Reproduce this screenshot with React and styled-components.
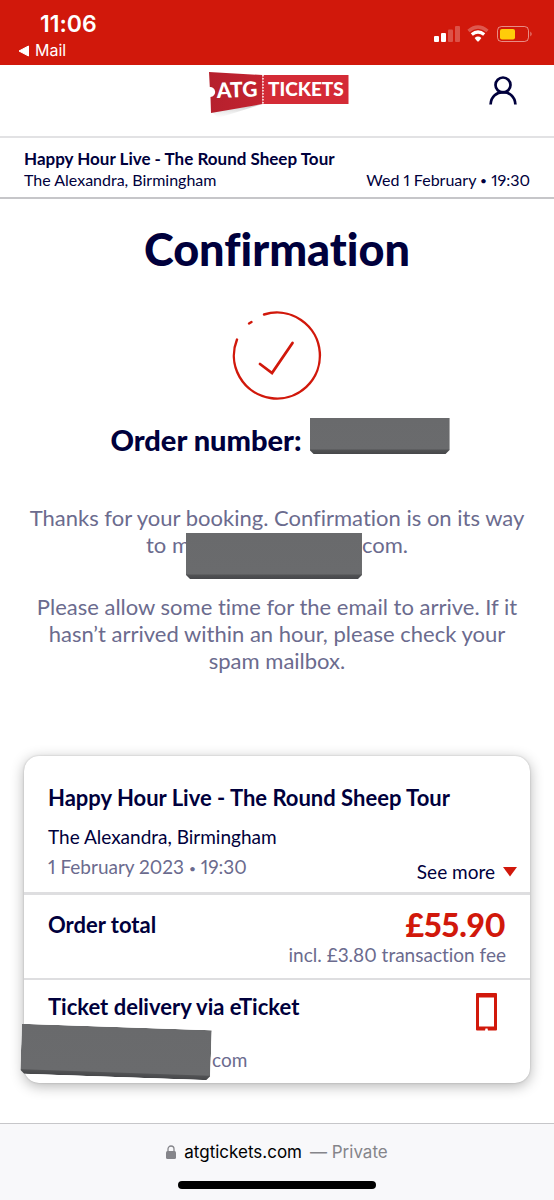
import React from "react";
import styled, { createGlobalStyle } from "styled-components";

const navy = "#00003c";
const slate = "#6b6b8e";
const red = "#d1180b";

const GlobalStyle = createGlobalStyle`
  * {
    box-sizing: border-box;
  }

  body {
    margin: 0;
    background: #fff;
    color: ${navy};
    font-family: Lato, "Open Sans", sans-serif;
    font-variant-ligatures: none;
    font-variant-numeric: proportional-nums;
  }

  h1, h2, h3, p {
    margin: 0;
  }
`;

const Page = styled.div`
  min-height: 100vh;
  display: flex;
  flex-direction: column;
`;

const StatusBar = styled.div`
  height: 65px;
  padding: 10px 22px 0 18px;
  display: flex;
  justify-content: space-between;
  background: ${red};
  color: #fff;
  font-family: Inter, sans-serif;
`;

const Clock = styled.div`
  padding-left: 22px;
  font-size: 23px;
  font-weight: 600;
  line-height: 28px;
`;

const BackLink = styled.a`
  display: flex;
  align-items: center;
  gap: 6px;
  color: inherit;
  font-size: 16px;
  line-height: 25px;
  text-decoration: none;
`;

const Header = styled.header`
  height: 73px;
  padding: 6px 37px 0;
  display: grid;
  grid-template-columns: 1fr auto 1fr;
  align-items: start;
  border-bottom: 2px solid #e2e2e4;
`;

const LogoLink = styled.a`
  grid-column: 2;
  display: block;
`;

const AccountButton = styled.button`
  justify-self: end;
  margin-top: 5px;
  padding: 0;
  border: 0;
  background: none;
  display: block;

  svg {
    display: block;
  }
`;

const EventBar = styled.div`
  height: 61px;
  padding: 10px 24px 0;
  border-bottom: 2px solid #c6c6c9;
  font-size: 16px;
  line-height: 21px;
`;

const EventName = styled.div`
  font-size: 17px;
  font-weight: 700;
`;

const SpreadRow = styled.div`
  display: flex;
  justify-content: space-between;
  align-items: ${(props) => props.align || "flex-start"};
`;

const Dot = styled.span`
  font-size: 12px;
  vertical-align: 1px;
`;

const Main = styled.main`
  flex: 1;
  padding: 0 24px 40px;
  text-align: center;
`;

const Title = styled.h1`
  padding-top: 23px;
  font-size: 45px;
  font-weight: 900;
  line-height: 54px;
`;

const Tick = styled.svg`
  display: block;
  margin: 35px auto 0;
`;

const OrderNumber = styled.h2`
  margin-top: 17px;
  padding-left: 6px;
  display: flex;
  justify-content: center;
  align-items: flex-end;
  gap: 8px;
  font-size: 29px;
  font-weight: 900;
  line-height: 30px;
`;

const Redaction = styled.span`
  display: block;
  width: ${(props) => props.w}px;
  height: ${(props) => props.h}px;
  background: linear-gradient(to top, #46474a 0, #515254 4px, #6a6b6d 5px, #696a6c 100%);
  clip-path: polygon(0 0, 100% 0, 100% calc(100% - 4px), calc(100% - 4px) 100%, 4px 100%, 0 calc(100% - 4px));
`;

const OrderRedaction = styled(Redaction)`
  margin-bottom: 1px;
`;

const Message = styled.p`
  margin-top: ${(props) => props.gap}px;
  color: ${slate};
  font-size: 22px;
  line-height: 27px;
`;

const EmailGap = styled.span`
  position: relative;
  display: inline-block;
  width: 172px;
  height: 1px;

  ${Redaction} {
    position: absolute;
    right: 0;
    bottom: -26px;
  }
`;

const Card = styled.section`
  margin-top: 82px;
  border-radius: 15px;
  background: #fff;
  box-shadow: 0 3px 14px rgba(0, 0, 0, 0.3), 0 0 2px rgba(0, 0, 0, 0.2);
  text-align: left;
`;

const CardPart = styled.div`
  height: ${(props) => props.h}px;
  padding: ${(props) => props.top}px 24px 0;
  border-bottom: ${(props) => props.line || 0}px solid #dedee0;
`;

const CardTitle = styled.h3`
  font-size: 22px;
  font-weight: 700;
  line-height: 28px;
`;

const Venue = styled.div`
  margin-top: 10px;
  font-size: 19px;
  line-height: 30px;
`;

const Muted = styled.div`
  color: ${slate};
  font-size: 19px;
  line-height: 30px;
  text-align: ${(props) => props.align || "left"};
`;

const SeeMore = styled.button`
  margin-right: -11px;
  padding: 0;
  display: flex;
  align-items: center;
  gap: 8px;
  border: 0;
  background: none;
  color: inherit;
  font: inherit;
  font-size: 19px;
  line-height: 24px;
`;

const Total = styled.div`
  color: ${red};
  font-size: 32px;
  font-weight: 900;
  line-height: 30px;
`;

const DeliveryEmail = styled.div`
  display: flex;
  align-items: center;
  margin: -4px 0 0 -27px;
  color: ${slate};
  font-size: 19px;
`;

const TiltedRedaction = styled(Redaction)`
  margin: 0 1px 14px 0;
  transform: rotate(2deg);
`;

const AddressBar = styled.footer`
  height: 77px;
  padding-top: 16px;
  border-top: 1px solid #c6c6c9;
  background: #f8f8fa;
  font-family: Inter, sans-serif;
  font-size: 17px;
  line-height: 24px;
`;

const Address = styled.div`
  display: flex;
  justify-content: center;
  align-items: center;
  gap: 8px;
  color: #85858a;
`;

const Domain = styled.span`
  color: #000;
`;

const HomeIndicator = styled.div`
  width: 198px;
  height: 8px;
  margin: 17px auto 0;
  border-radius: 4px;
  background: #000;
`;

const StatusIcons = () => (
  <svg width="98" height="50" viewBox="434 10 98 50" fill="#fff">
    <rect x="434" y="36" width="5" height="6" rx="1" />
    <rect x="441" y="33" width="5" height="9" rx="1" />
    <rect x="448" y="29.500" width="5" height="12.500" rx="1" opacity="0.25" />
    <rect x="455" y="26" width="5" height="16" rx="1" opacity="0.25" />
    <g fill="none" stroke="#fff">
      <path d="M468.500 31 Q478 23 487.500 31" strokeWidth="3.400" opacity="0.28" />
      <path d="M471.800 34.600 Q478 29.400 484.200 34.600" strokeWidth="3.200" />
    </g>
    <path d="M474.600 38 Q478 35.200 481.400 38 L478.800 41.200 Q478 42 477.200 41.200 Z" />
    <rect x="497.500" y="26.500" width="31" height="15" rx="4" fill="none" stroke="#fff" opacity="0.5" />
    <rect x="500" y="29" width="15" height="10.500" rx="2" fill="#ffcc0a" />
    <path d="M530.500 31.500 q2 2.500 0 5z" opacity="0.6" />
  </svg>
);

const BackArrow = () => (
  <svg width="11" height="12" viewBox="0 0 11 12">
    <path d="M10.500 1 v10 L1 6z" fill="#fff" stroke="#fff" strokeLinejoin="round" />
  </svg>
);

const Logo = () => (
  <svg width="144" height="48" viewBox="205 71 144 48" role="img" aria-label="ATG Tickets">
    <defs>
      <linearGradient id="stub" x1="0" y1="0" x2="1" y2="0">
        <stop offset="0" stopColor="#b5202d" />
        <stop offset="1" stopColor="#c32330" />
      </linearGradient>
      <linearGradient id="shade" x1="0" y1="0" x2="0" y2="1">
        <stop offset="0" stopColor="#999" stopOpacity="0.6" />
        <stop offset="1" stopColor="#ccc" stopOpacity="0" />
      </linearGradient>
    </defs>
    <path d="M212 112 L262 104 L250 108 L218 118z" fill="url(#shade)" />
    <path d="M209 72 L262.500 75 V104 L211 113 L210.500 97 A5 5 0 0 0 209.800 87z" fill="url(#stub)" />
    <path d="M262.500 75 H348.500 V104 H262.500z" fill="#d42b36" />
    <path d="M263 75 V104" stroke="#fff" strokeDasharray="1.600 1.400" strokeWidth="1.400" />
    <g fill="#fff" fontFamily="Lato, sans-serif" fontWeight="900">
      <text x="217" y="98" fontSize="21" transform="rotate(-2 217 98)">ATG</text>
      <text x="268" y="96" fontSize="19">TICKETS</text>
    </g>
  </svg>
);

const PersonIcon = () => (
  <svg width="28" height="29" viewBox="0 0 28 29" fill="none" stroke={navy} strokeWidth="2.700">
    <circle cx="14" cy="9" r="7.500" />
    <path d="M1.600 28.500 C2.300 12 25.700 12 26.400 28.500" />
  </svg>
);

const Lock = () => (
  <svg width="10" height="14" viewBox="0 0 10 14">
    <rect y="6" width="10" height="8" rx="1.500" fill="#85858a" />
    <path d="M2 7 V4 a3 3 0 0 1 6 0 V7" fill="none" stroke="#85858a" strokeWidth="1.300" />
  </svg>
);

const PhoneIcon = () => (
  <svg width="32" height="38" viewBox="0 0 32 38">
    <path
      d="M3 0 H22 Q23 0 23 1 V36.500 Q23 37.500 22 37.500 H14 L13.500 35.500 H11.500 L11 37.500 H3 Q2 37.500 2 36.500 V1 Q2 0 3 0z M5 4.500 V33.500 H20 V4.500z"
      fill={red}
      fillRule="evenodd"
    />
  </svg>
);

const App = () => {
  return (
    <Page>
      <GlobalStyle />
      <StatusBar>
        <div>
          <Clock>11:06</Clock>
          <BackLink href="#mail">
            <BackArrow />
            Mail
          </BackLink>
        </div>
        <StatusIcons />
      </StatusBar>
      <Header>
        <LogoLink href="#home">
          <Logo />
        </LogoLink>
        <AccountButton aria-label="Account">
          <PersonIcon />
        </AccountButton>
      </Header>
      <EventBar>
        <EventName>Happy Hour Live - The Round Sheep Tour</EventName>
        <SpreadRow>
          <span>The Alexandra, Birmingham</span>
          <span>
            Wed 1 February <Dot>•</Dot> 19:30
          </span>
        </SpreadRow>
      </EventBar>
      <Main>
        <Title>Confirmation</Title>
        <Tick width="90" height="90" viewBox="0 0 90 90" fill="none" stroke={red} strokeLinecap="round">
          <path d="M32 3.500 A43 43 0 1 1 5 28.500" strokeWidth="2.400" />
          <path d="M17 12.500 L19.500 11" strokeWidth="2.400" />
          <path d="M28 53 L40 62 L60.500 32" strokeWidth="2.800" />
        </Tick>
        <OrderNumber>
          Order number:
          <OrderRedaction w={140} h={36} />
        </OrderNumber>
        <Message gap={49}>
          Thanks for your booking. Confirmation is on its way
          <br />
          to m
          <EmailGap>
            <Redaction w={176} h={46} />
          </EmailGap>
          com.
        </Message>
        <Message gap={35}>
          Please allow some time for the email to arrive. If it
          <br />
          hasn’t arrived within an hour, please check your
          <br />
          spam mailbox.
        </Message>
        <Card>
          <CardPart h={139} top={28} line={3}>
            <CardTitle>Happy Hour Live - The Round Sheep Tour</CardTitle>
            <Venue>The Alexandra, Birmingham</Venue>
            <SpreadRow align="flex-end">
              <Muted>
                1 February 2023 <Dot>•</Dot> 19:30
              </Muted>
              <SeeMore>
                See more
                <svg width="14" height="10" viewBox="0 0 14 10">
                  <path d="M0 0 H14 L7 9.500z" fill={red} />
                </svg>
              </SeeMore>
            </SpreadRow>
          </CardPart>
          <CardPart h={85} top={15} line={2}>
            <SpreadRow align="center">
              <CardTitle>Order total</CardTitle>
              <Total>£55.90</Total>
            </SpreadRow>
            <Muted align="right">incl. £3.80 transaction fee</Muted>
          </CardPart>
          <CardPart h={103} top={13}>
            <SpreadRow>
              <CardTitle>Ticket delivery via eTicket</CardTitle>
              <PhoneIcon />
            </SpreadRow>
            <DeliveryEmail>
              <TiltedRedaction w={190} h={50} />
              com
            </DeliveryEmail>
          </CardPart>
        </Card>
      </Main>
      <AddressBar>
        <Address>
          <Lock />
          <Domain>atgtickets.com</Domain>
          <span>— Private</span>
        </Address>
        <HomeIndicator />
      </AddressBar>
    </Page>
  );
};

export default App;
